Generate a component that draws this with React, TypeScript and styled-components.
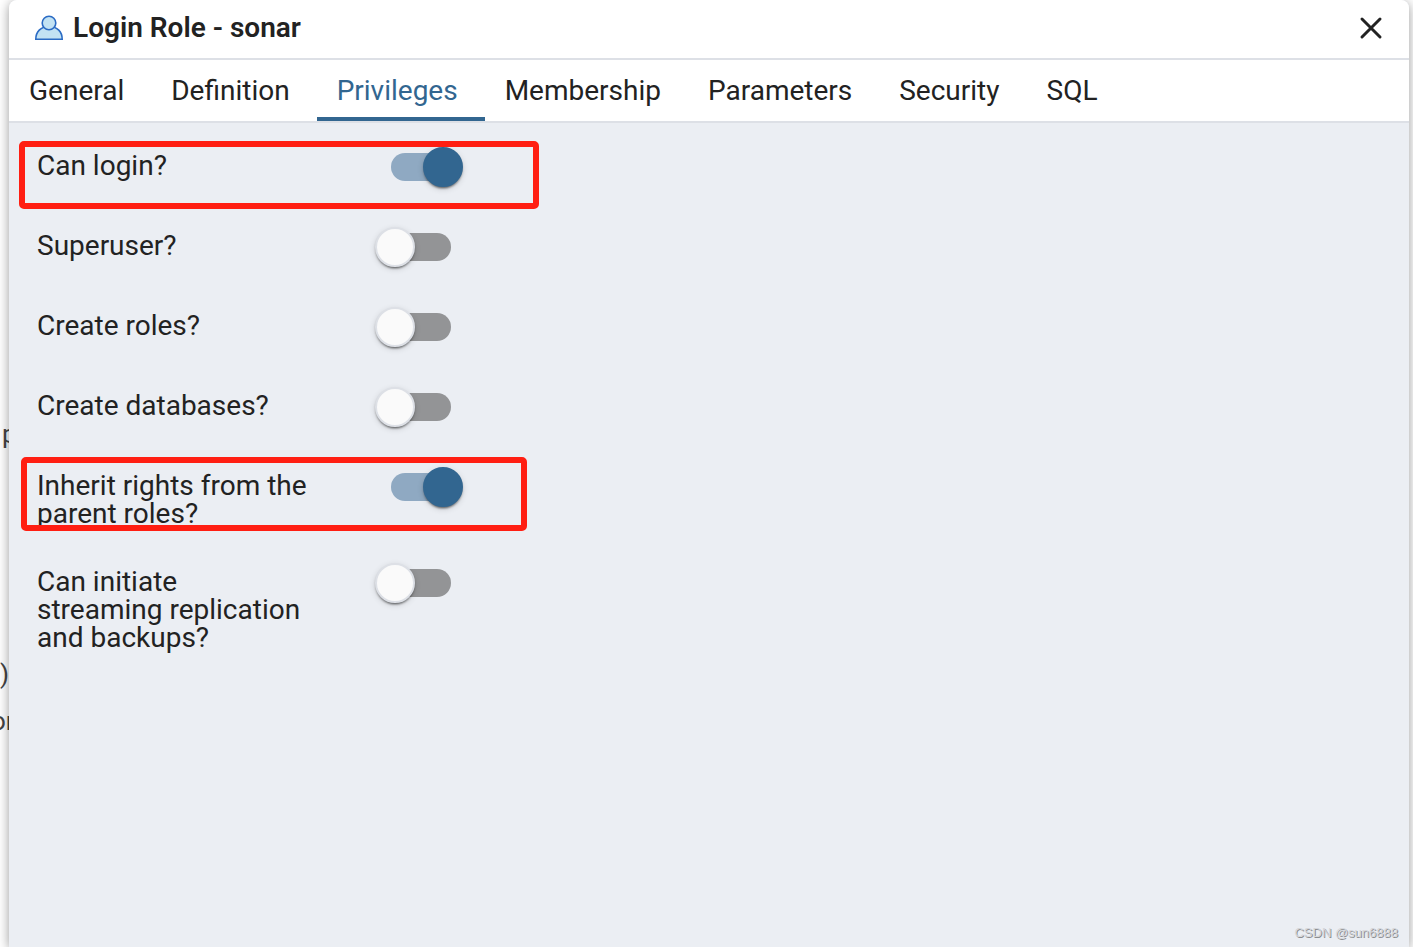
import React, { useState } from "react";
import styled, { createGlobalStyle } from "styled-components";

const GlobalStyle = createGlobalStyle`
  *, *::before, *::after { box-sizing: border-box; }
  body {
    margin: 0;
    background: #fff;
    color: #222;
    font-family: Roboto, "Liberation Sans", sans-serif;
    font-size: 28px;
    line-height: 28px;
  }
`;

const Page = styled.div`
  position: relative;
  min-height: 100vh;
  display: flex;
  padding: 0 4px 0 9px;
  overflow: hidden;
`;

const Backdrop = styled.span<{ $top: number; $left: number }>`
  position: absolute;
  top: ${(p) => p.$top}px;
  left: ${(p) => p.$left}px;
  font-size: 26px;
  color: #444;
  white-space: nowrap;
`;

const Dialog = styled.section`
  position: relative;
  flex: 1;
  min-width: 0;
  display: flex;
  flex-direction: column;
  background: #ebeef3;
  border-radius: 8px 8px 0 0;
  box-shadow: 0 2px 12px rgba(0, 0, 0, 0.4);
`;

const Header = styled.header`
  display: flex;
  align-items: center;
  gap: 10px;
  height: 60px;
  padding: 0 24px 2px 26px;
  background: #fff;
  border-bottom: 2px solid #dde0e6;
  border-radius: 8px 8px 0 0;
`;

const Title = styled.h1`
  flex: 1;
  margin: 0;
  font-size: 28px;
  line-height: 28px;
  font-weight: 600;
`;

const CloseButton = styled.button`
  display: flex;
  padding: 0;
  border: 0;
  background: none;
  color: #222;
  cursor: pointer;
`;

const TabBar = styled.div`
  display: flex;
  height: 63px;
  background: #fff;
  border-bottom: 2px solid #dde0e6;
`;

const Tab = styled.button<{ $active: boolean }>`
  padding: 4px 27px 0 20px;
  border: 0;
  border-bottom: 4px solid ${(p) => (p.$active ? "#326690" : "transparent")};
  background: none;
  color: ${(p) => (p.$active ? "#326690" : "#222")};
  font: inherit;
  text-align: left;
  white-space: nowrap;
  cursor: pointer;
`;

const Panel = styled.div`
  flex: 1;
  display: flex;
  flex-direction: column;
  gap: 36px;
  padding: 24px 28px;
`;

const Row = styled.div`
  position: relative;
  display: grid;
  grid-template-columns: 338px auto;
  align-items: start;
  justify-content: start;
  min-height: 44px;
`;

const Label = styled.label`
  padding-top: 5px;
  margin-bottom: -1px;
  white-space: pre-line;
`;

const Switch = styled.input`
  appearance: none;
  position: relative;
  width: 76px;
  height: 40px;
  margin: 0;
  cursor: pointer;

  &::before {
    content: "";
    position: absolute;
    top: 6px;
    left: 8px;
    width: 68px;
    height: 28px;
    border-radius: 14px;
    background: #939496;
  }

  &::after {
    content: "";
    position: absolute;
    top: 0;
    left: 0;
    width: 40px;
    height: 40px;
    border: 2px solid #dde0e6;
    border-radius: 50%;
    background: #fafafa;
    box-shadow: 0 3px 2px -2px rgba(0, 0, 0, 0.4), 0 2px 2px rgba(0, 0, 0, 0.2),
      0 2px 6px rgba(0, 0, 0, 0.14);
  }

  &:checked::before {
    left: 16px;
    background: #8fa9c2;
  }

  &:checked::after {
    left: 48px;
    border-color: #326690;
    background: #326690;
  }
`;

const Highlight = styled.span<{ $top: number; $left: number; $width: number; $height: number }>`
  position: absolute;
  top: ${(p) => p.$top}px;
  left: ${(p) => p.$left}px;
  width: ${(p) => p.$width}px;
  height: ${(p) => p.$height}px;
  border: 6px solid #ff1e12;
  border-radius: 5px;
  pointer-events: none;
`;

const Watermark = styled.span`
  position: absolute;
  right: 11px;
  bottom: 6px;
  font-family: "Liberation Sans", sans-serif;
  font-size: 13px;
  line-height: 16px;
  color: #d4d6da;
  text-shadow: 1px 1px 0 #8c8d90;
`;

const tabs = ["General", "Definition", "Privileges", "Membership", "Parameters", "Security", "SQL"];

const privileges = [
  { id: "login", label: "Can login?", on: true, mark: { $top: -6, $left: -18, $width: 520, $height: 68 } },
  { id: "super", label: "Superuser?", on: false },
  { id: "roles", label: "Create roles?", on: false },
  { id: "databases", label: "Create databases?", on: false },
  {
    id: "inherit",
    label: "Inherit rights from the\nparent roles?",
    on: true,
    mark: { $top: -10, $left: -16, $width: 506, $height: 74 },
  },
  { id: "replication", label: "Can initiate\nstreaming replication\nand backups?", on: false },
];

function RoleIcon() {
  return (
    <svg width="28" height="26" viewBox="0 0 28 26" fill="#c2e2f3" stroke="#2b6bc4" strokeWidth="1.6" aria-hidden="true">
      <path d="M0.800 24.200C0.800 17 5.500 11.500 14 11.500S27.200 17 27.200 24.200z" />
      <circle cx="14" cy="8" r="6.800" />
    </svg>
  );
}

export default function App() {
  const [active, setActive] = useState("Privileges");
  return (
    <>
      <GlobalStyle />
      <Page>
        <Backdrop $top={420} $left={2}>p</Backdrop>
        <Backdrop $top={660} $left={0}>)</Backdrop>
        <Backdrop $top={707} $left={-9}>or</Backdrop>
        <Dialog role="dialog" aria-labelledby="dialog-title">
          <Header>
            <RoleIcon />
            <Title id="dialog-title">Login Role - sonar</Title>
            <CloseButton aria-label="Close">
              <svg width="28" height="28" viewBox="0 0 28 28" stroke="currentColor" strokeWidth="3" strokeLinecap="round">
                <path d="M5 5l18 18M23 5L5 23" />
              </svg>
            </CloseButton>
          </Header>
          <TabBar role="tablist">
            {tabs.map((t) => (
              <Tab key={t} role="tab" aria-selected={t === active} $active={t === active} onClick={() => setActive(t)}>
                {t}
              </Tab>
            ))}
          </TabBar>
          <Panel role="tabpanel">
            {privileges.map((p) => (
              <Row key={p.id}>
                <Label htmlFor={p.id}>{p.label}</Label>
                <Switch id={p.id} type="checkbox" role="switch" defaultChecked={p.on} />
                {p.mark && <Highlight {...p.mark} />}
              </Row>
            ))}
          </Panel>
          <Watermark>CSDN @sun6888</Watermark>
        </Dialog>
      </Page>
    </>
  );
}
